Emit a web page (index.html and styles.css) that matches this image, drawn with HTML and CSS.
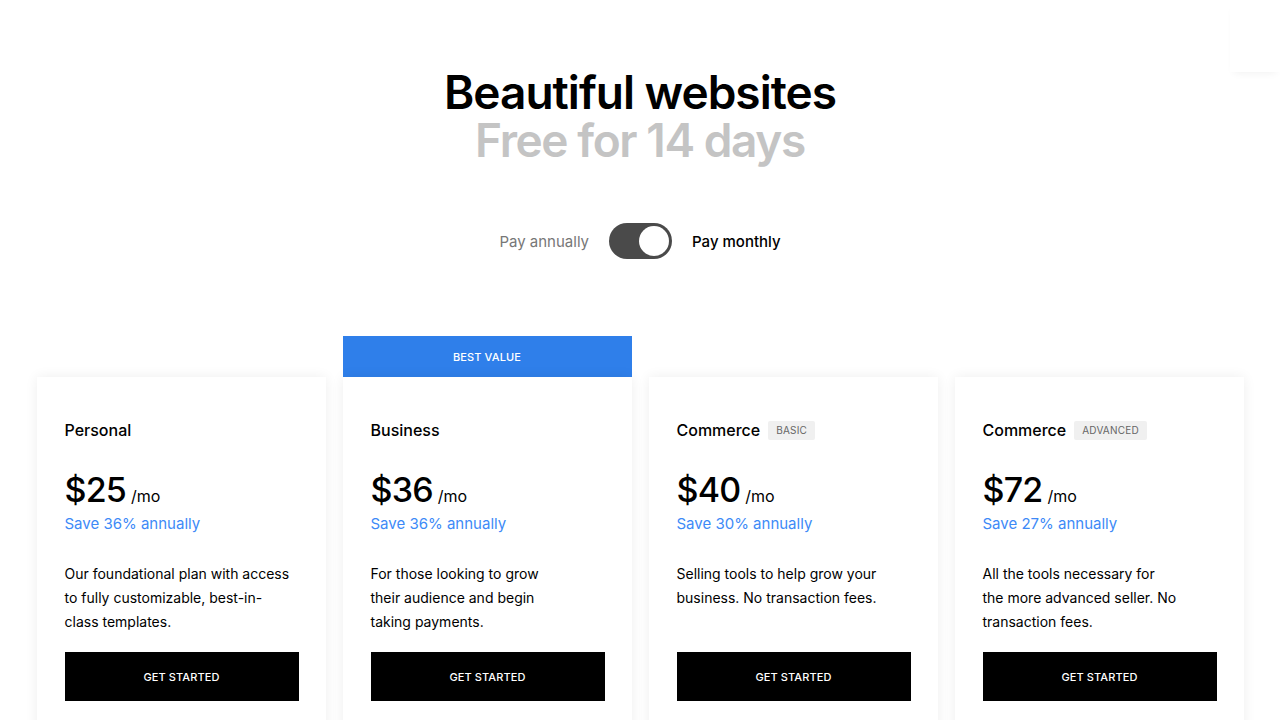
FILE: index.html
```html
<!DOCTYPE html>
<html lang="en">
<head>
<meta charset="utf-8">
<title>Pricing</title>
<link rel="stylesheet" href="styles.css">
</head>
<body>
<div class="edge-shadow"></div>
<main class="page">
  <header class="hero">
    <h1 class="hero-title"><span class="hero-main">Beautiful websites</span><span class="hero-sub">Free for 14 days</span></h1>
  </header>
  <div class="billing">
    <span class="billing-label muted">Pay annually</span>
    <span class="switch"><span class="knob"></span></span>
    <span class="billing-label active">Pay monthly</span>
  </div>
  <section class="plans">
    <div class="plan-col">
      <div class="card">
        <div class="plan-name">Personal</div>
        <div class="price"><span class="amount">$25</span><span class="per">/mo</span></div>
        <div class="save">Save 36% annually</div>
        <p class="desc">Our foundational plan with access<br>to fully customizable, best-in-<br>class templates.</p>
        <a class="cta">GET STARTED</a>
      </div>
    </div>
    <div class="plan-col featured">
      <div class="banner">BEST VALUE</div>
      <div class="card">
        <div class="plan-name">Business</div>
        <div class="price"><span class="amount">$36</span><span class="per">/mo</span></div>
        <div class="save">Save 36% annually</div>
        <p class="desc">For those looking to grow<br>their audience and begin<br>taking payments.</p>
        <a class="cta">GET STARTED</a>
      </div>
    </div>
    <div class="plan-col">
      <div class="card">
        <div class="plan-name">Commerce <span class="tag">BASIC</span></div>
        <div class="price"><span class="amount">$40</span><span class="per">/mo</span></div>
        <div class="save">Save 30% annually</div>
        <p class="desc">Selling tools to help grow your<br>business. No transaction fees.</p>
        <a class="cta">GET STARTED</a>
      </div>
    </div>
    <div class="plan-col">
      <div class="card">
        <div class="plan-name">Commerce <span class="tag">ADVANCED</span></div>
        <div class="price"><span class="amount">$72</span><span class="per">/mo</span></div>
        <div class="save">Save 27% annually</div>
        <p class="desc">All the tools necessary for<br>the more advanced seller. No<br>transaction fees.</p>
        <a class="cta">GET STARTED</a>
      </div>
    </div>
  </section>
</main>
</body>
</html>
```
FILE: styles.css
```css
* { box-sizing: border-box; }
html, body { margin: 0; padding: 0; background: #fff; }
body {
  font-family: Inter, "Liberation Sans", sans-serif;
  color: #000;
  overflow: hidden;
  height: 720px;
}
.edge-shadow {
  position: absolute;
  top: 0;
  right: 0;
  width: 50px;
  height: 72px;
  background: #fff;
  box-shadow: 0 5px 8px -4px rgba(0,0,0,0.06);
}
.page {
  display: flex;
  flex-direction: column;
  align-items: center;
  padding-top: 68px;
}
.hero-title {
  margin: 0;
  display: flex;
  flex-direction: column;
  align-items: center;
  font-size: 46px;
  font-weight: 600;
  line-height: 48px;
}
.hero-main { color: #000; letter-spacing: -1px; }
.hero-sub { color: #c4c4c4; letter-spacing: -1.4px; }
.billing {
  display: flex;
  align-items: center;
  gap: 20px;
  margin-top: 59px;
  font-size: 15px;
}
.billing-label.muted { color: #777; }
.billing-label.active { color: #000; font-weight: 500; }
.switch {
  width: 63px;
  height: 36px;
  border-radius: 18px;
  background: #4a4a4a;
  display: flex;
  align-items: center;
  justify-content: flex-end;
  padding: 3px;
}
.knob {
  width: 30px;
  height: 30px;
  border-radius: 50%;
  background: #fff;
}
.plans {
  display: grid;
  grid-template-columns: repeat(4, 289px);
  gap: 17px;
  margin-top: 77px;
}
.plan-col { padding-top: 41px; }
.plan-col.featured { padding-top: 0; }
.banner {
  height: 41px;
  background: #2f7fea;
  color: #fff;
  font-size: 11px;
  font-weight: 500;
  display: flex;
  align-items: center;
  justify-content: center;
  letter-spacing: 0.1px;
}
.card {
  background: #fff;
  box-shadow: 0 0 12px rgba(0,0,0,0.07);
  padding: 43px 27px 40px 28px;
  height: 400px;
}
.plan-name {
  font-size: 16px;
  font-weight: 500;
  line-height: 20px;
  display: flex;
  align-items: center;
  gap: 8px;
}
.tag {
  font-size: 10px;
  font-weight: 400;
  color: #666;
  background: #f0f0f0;
  border-radius: 2px;
  padding: 0 8px;
  line-height: 19px;
  letter-spacing: 0.2px;
}
.price {
  margin-top: 32px;
  display: flex;
  align-items: baseline;
  gap: 5px;
}
.amount { font-size: 34px; line-height: 36px; font-weight: 500; letter-spacing: -0.8px; }
.per { font-size: 16px; line-height: 16px; }
.save {
  margin-top: 5px;
  font-size: 15px;
  line-height: 22px;
  color: #3d8af7;
}
.desc {
  margin: 27px 0 0;
  font-size: 14px;
  line-height: 24px;
  min-height: 72px;
}
.cta {
  display: flex;
  align-items: center;
  justify-content: center;
  margin-top: 18px;
  height: 49px;
  background: #000;
  color: #fff;
  font-size: 11px;
  font-weight: 500;
  letter-spacing: 0.1px;
}
```
